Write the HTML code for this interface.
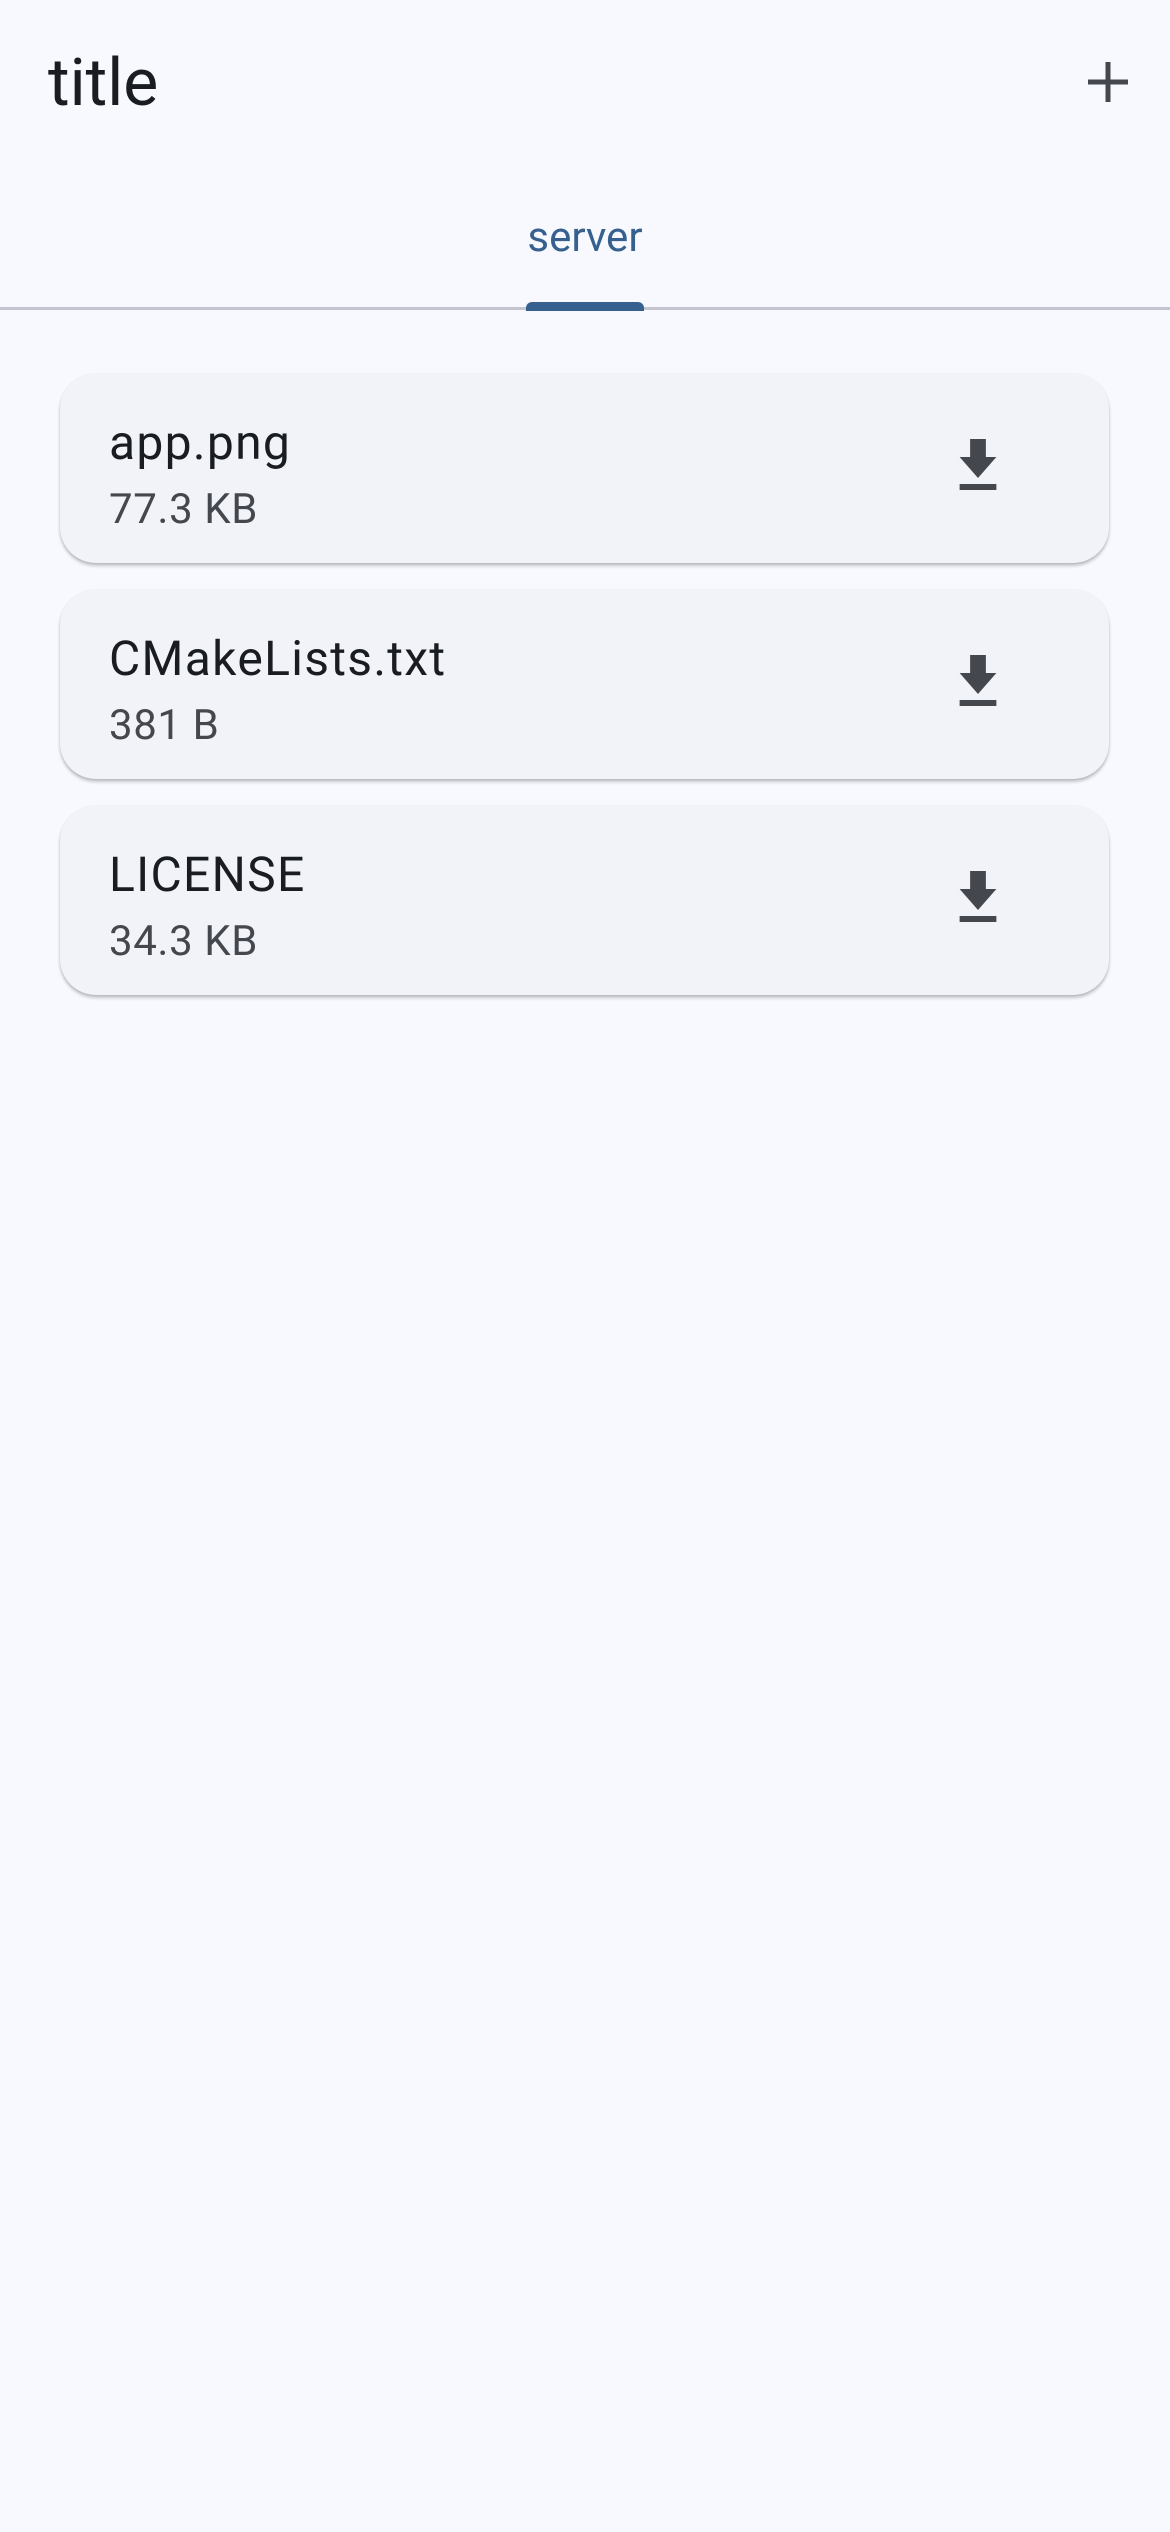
<!DOCTYPE html>
<html><head><meta charset="utf-8"><style>
*{margin:0;padding:0;box-sizing:border-box}
html,body{width:1170px;height:2532px;background:#f8f9ff;font-family:"Roboto","Liberation Sans",sans-serif;overflow:hidden}
.title{position:absolute;left:48px;top:44px;font-size:66px;line-height:80px;color:#191c20}
.plus{position:absolute;left:1086px;top:60px;width:44px;height:44px}
.tab{position:absolute;left:0;width:1170px;top:210px;text-align:center;font-size:42px;color:#36618e;line-height:56px}
.ind{position:absolute;left:526px;top:302px;width:118px;height:9px;background:#36618e;border-radius:6px 6px 0 0}
.div{position:absolute;left:0;top:307px;width:1170px;height:3px;background:#c4c6cf}
.card{position:absolute;left:60px;width:1049px;height:190px;background:#f1f3f9;border-radius:36px;box-shadow:0 3px 3px rgba(0,0,0,.2),0 1px 2px rgba(0,0,0,.1)}
.n{position:absolute;left:49px;top:42px;font-size:48px;letter-spacing:1.3px;color:#191c20;line-height:56px}
.s{position:absolute;left:49px;top:111px;font-size:42px;letter-spacing:0.6px;color:#44474e;line-height:52px}
.dl{position:absolute;left:882px;top:57px;width:72px;height:72px}
</style></head><body>
<div class="title">title</div>
<svg class="plus" viewBox="0 0 44 44"><path d="M22 2v40M2 22h40" stroke="#44474e" stroke-width="5"/></svg>
<div class="tab">server</div>
<div class="div"></div>
<div class="ind"></div>
<div class="card" style="top:373px"><div class="n">app.png</div><div class="s">77.3 KB</div><svg class="dl" viewBox="0 0 24 24"><path fill="#44474e" d="M19 9h-4V3H9v6H5l7 7 7-7zM5 18v2h14v-2H5z" transform="translate(1.5 0) scale(0.875 1)"/></svg></div>
<div class="card" style="top:589px"><div class="n">CMakeLists.txt</div><div class="s">381 B</div><svg class="dl" viewBox="0 0 24 24"><path fill="#44474e" d="M19 9h-4V3H9v6H5l7 7 7-7zM5 18v2h14v-2H5z" transform="translate(1.5 0) scale(0.875 1)"/></svg></div>
<div class="card" style="top:805px"><div class="n">LICENSE</div><div class="s">34.3 KB</div><svg class="dl" viewBox="0 0 24 24"><path fill="#44474e" d="M19 9h-4V3H9v6H5l7 7 7-7zM5 18v2h14v-2H5z" transform="translate(1.5 0) scale(0.875 1)"/></svg></div>
</body></html>
